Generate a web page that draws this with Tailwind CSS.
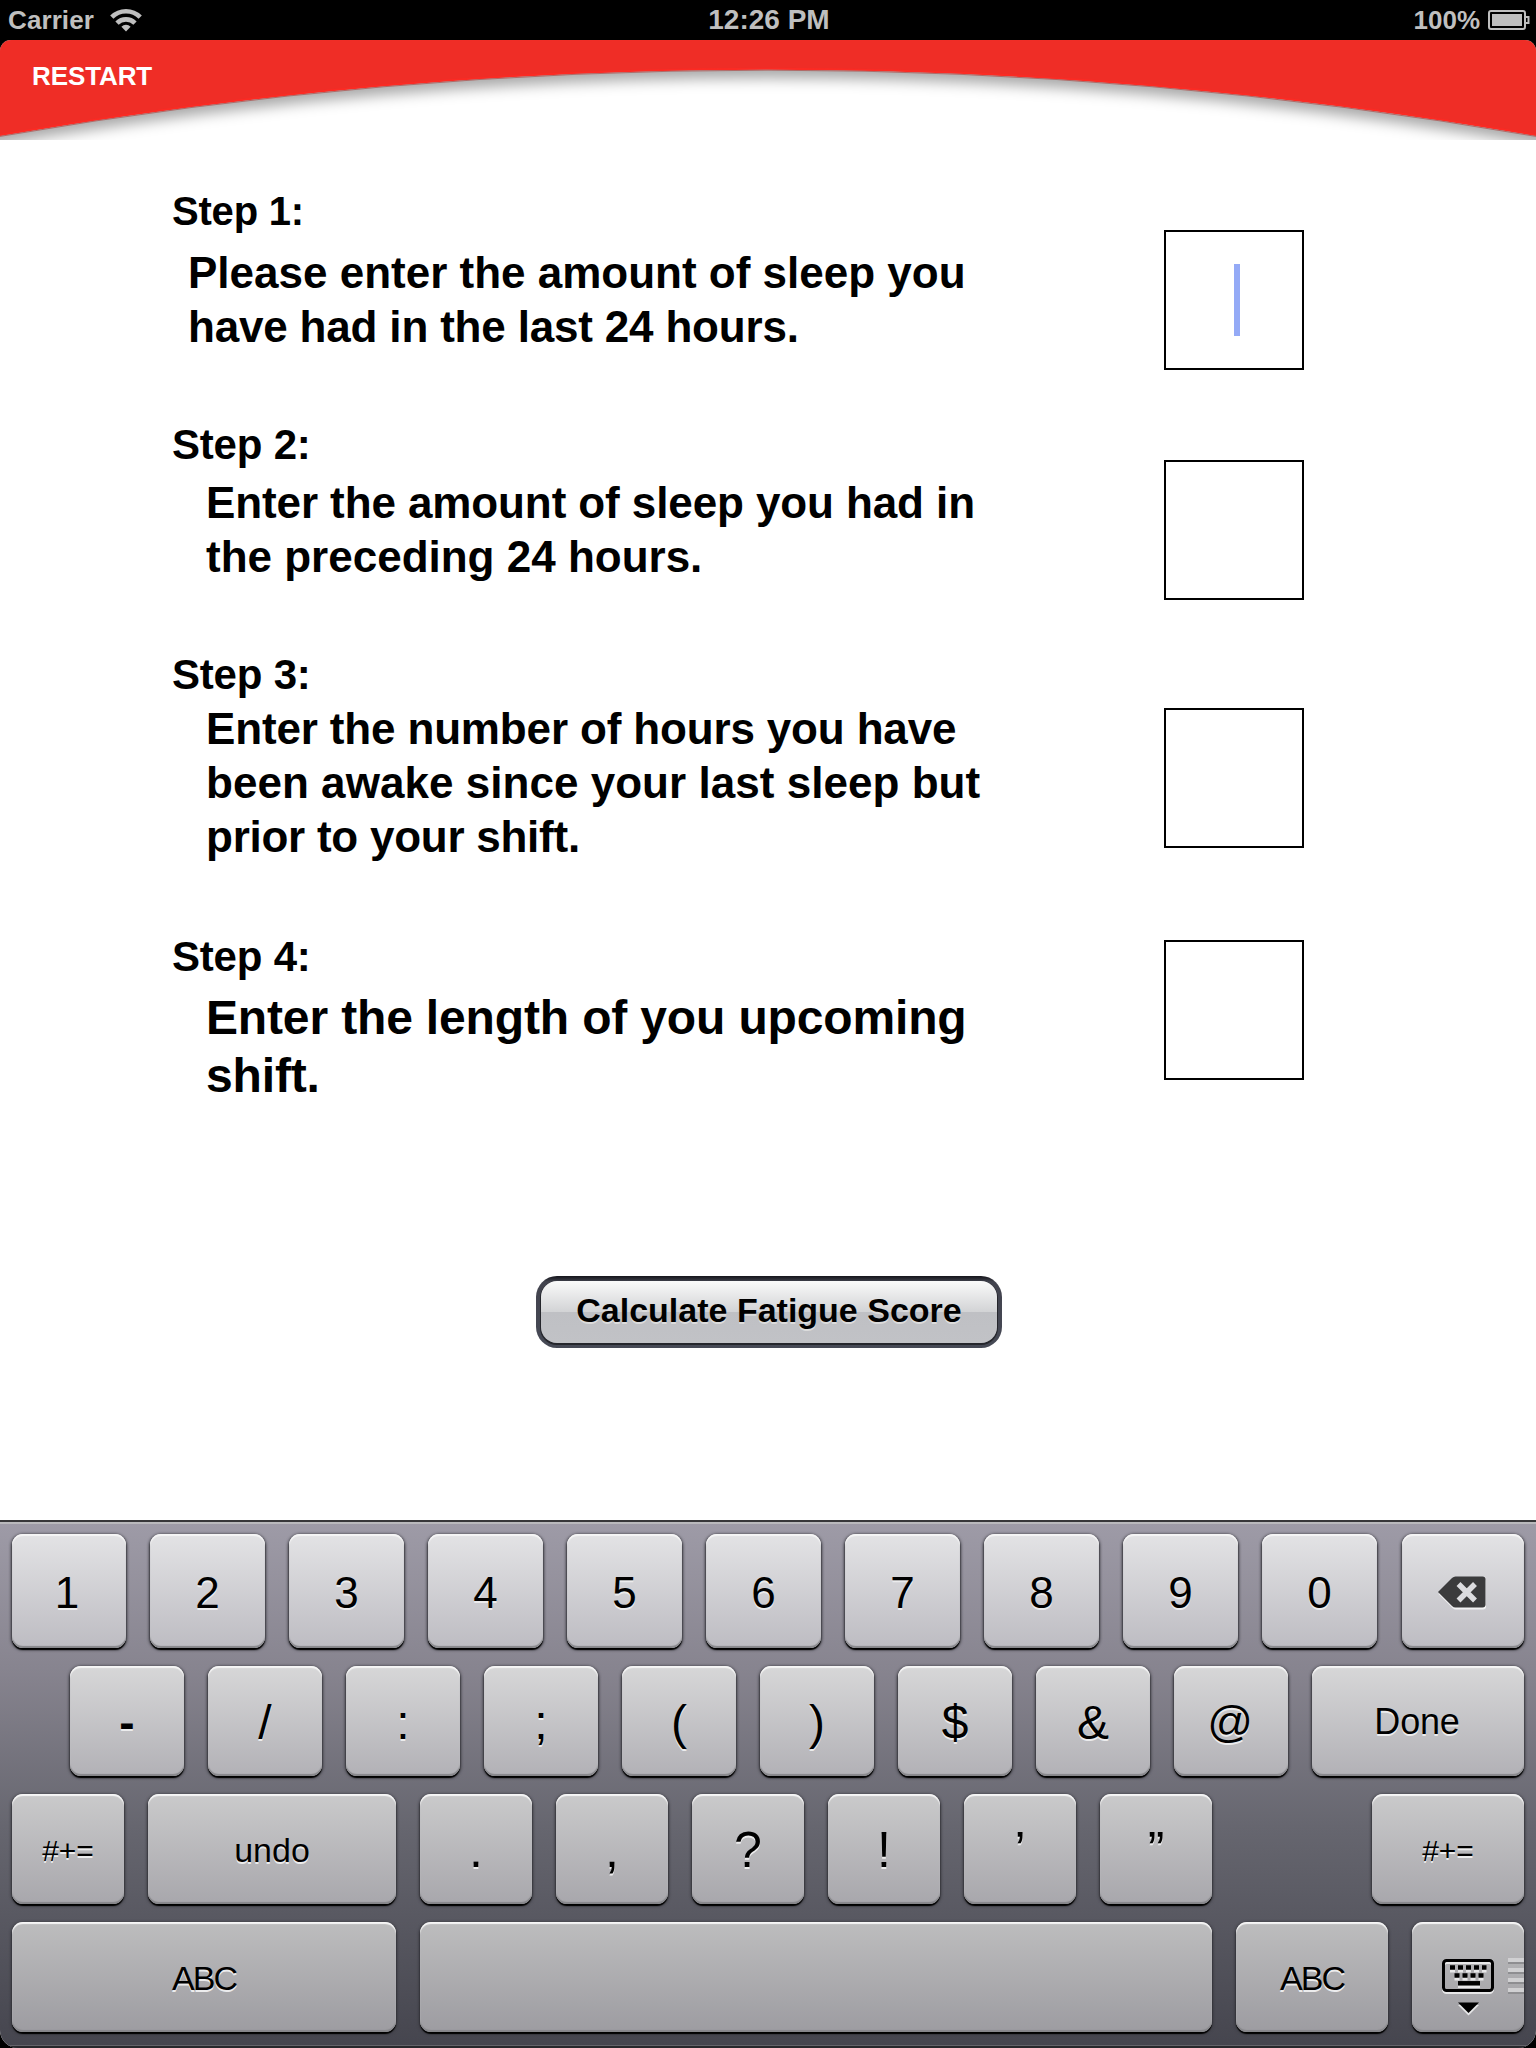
<!DOCTYPE html>
<html lang="en">
<head>
<meta charset="utf-8">
<title>Fatigue Score</title>
<script src="https://cdn.jsdelivr.net/npm/@tailwindcss/browser@4"></script>
</head>
<body class="bg-black">
<div class="flex h-[2048px] w-[1536px] flex-col overflow-hidden bg-black font-['Liberation_Sans',Arial,sans-serif] text-black">
  <!-- status bar -->
  <div class="grid h-10 shrink-0 grid-cols-3 items-center pr-[6px] pl-2 font-bold text-[#bfbfbf]">
    <div class="flex items-center text-[26px] leading-10">
      <span class="tracking-[0.1px]">Carrier</span>
      <svg class="ml-[16px]" width="32" height="24" viewBox="0 0 32 24"><g fill="none" stroke="#bfbfbf" stroke-width="4.6"><path d="M1.8 9.2a20 20 0 0 1 28.4 0"/><path d="M7 15.2a12.6 12.6 0 0 1 18 0"/></g><path d="M16 23.500l-4.600-4.800a6.600 6.600 0 0 1 9.200 0z" fill="#bfbfbf"/></svg>
    </div>
    <div class="text-center text-[28px] leading-[38px]">12:26 PM</div>
    <div class="flex items-center justify-end text-[26px] leading-10">
      <span>100%</span>
      <svg class="ml-[8px]" width="42" height="20" viewBox="0 0 42 20"><rect x="1" y="1" width="36" height="18" rx="2" fill="none" stroke="#bfbfbf" stroke-width="2"/><rect x="4" y="4" width="30" height="12" fill="#bfbfbf"/><path d="M38 7h2.500v6H38" fill="none" stroke="#bfbfbf" stroke-width="2"/></svg>
    </div>
  </div>

  <!-- app area -->
  <div class="flex grow flex-col overflow-hidden rounded-t-[11px] rounded-b-[18px] bg-white">
    <header class="relative h-[100px] shrink-0">
      <svg class="absolute inset-0" width="1536" height="100" viewBox="0 0 1536 100">
        <defs><filter id="soft" x="-5%" y="-30%" width="110%" height="160%"><feGaussianBlur stdDeviation="7"/></filter></defs>
        <path d="M-60 -30H1596V115.300Q768 -38.800 -60 115.300Z" fill="#000" fill-opacity=".34" filter="url(#soft)"/>
        <path d="M0 0H1536V95.500Q768 -37 0 95.500Z" fill="#ef2d26"/>
        <path d="M0 95Q768 -37.500 1536 95" fill="none" stroke="#fb2b24" stroke-width="2"/>
        <path d="M0 96.400Q768 -36.100 1536 96.400" fill="none" stroke="#b06a68" stroke-width="1"/>
      </svg>
      <button class="relative mt-[16px] ml-[32px] block text-[26px] leading-10 font-bold tracking-[-0.1px] text-white">RESTART</button>
    </header>

    <main class="flex h-[1380px] shrink-0 flex-col pt-[47px] pl-[172px] font-bold">
      <section class="flex h-[233px] shrink-0">
        <div class="w-[992px]">
          <h2 class="text-[40px] leading-[48px] tracking-[-0.2px]">Step 1:</h2>
          <p class="mt-[11px] ml-[16px] text-[44px] leading-[54px]">Please enter the amount of sleep you<br><span class="tracking-[-0.18px]">have had in the last 24 hours.</span></p>
        </div>
        <div class="mt-[43px] flex size-[140px] items-center justify-center border-2 border-black"><div class="ml-[6px] h-[72px] w-[6px] bg-[#94aaf6]"></div></div>
      </section>
      <section class="flex h-[230px] shrink-0">
        <div class="w-[992px]">
          <h2 class="pt-px text-[42px] leading-[48px] tracking-[-0.2px]">Step 2:</h2>
          <p class="mt-[7px] ml-[34px] text-[44px] leading-[54px]"><span class="tracking-[-0.1px]">Enter the amount of sleep you had in</span><br>the preceding 24 hours.</p>
        </div>
        <div class="mt-[40px] size-[140px] border-2 border-black"></div>
      </section>
      <section class="flex h-[282px] shrink-0">
        <div class="w-[992px]">
          <h2 class="pt-px text-[42px] leading-[48px] tracking-[-0.2px]">Step 3:</h2>
          <p class="mt-[3px] ml-[34px] text-[44px] leading-[54px]"><span class="tracking-[-0.15px]">Enter the number of hours you have</span><br><span class="tracking-[0.04px]">been awake since your last sleep but</span><br><span class="tracking-[-0.25px]">prior to your shift.</span></p>
        </div>
        <div class="mt-[58px] size-[140px] border-2 border-black"></div>
      </section>
      <section class="flex h-[344px] shrink-0">
        <div class="w-[992px]">
          <h2 class="pt-px text-[42px] leading-[48px] tracking-[-0.2px]">Step 4:</h2>
          <p class="mt-[8px] ml-[34px] text-[48px] leading-[58px] tracking-[-0.15px]">Enter the length of you upcoming<br>shift.</p>
        </div>
        <div class="mt-[8px] size-[140px] border-2 border-black"></div>
      </section>
      <div class="ml-[364px] h-[72px] w-[466px] rounded-[21px] bg-linear-to-b from-[#15151b] via-[#42434e] via-8% to-[#464955] p-[5px]">
        <button class="block h-[62px] w-[456px] rounded-[16px] bg-[linear-gradient(#fafafa,#d2d3d5_50%,#bfc0c4_50%,#c1c2c6)] pb-[3px] text-[34px] leading-[55px] whitespace-nowrap shadow-[0_1px_0_1px_#25262c] [text-shadow:0_2px_0_#dcdcdc]">Calculate Fatigue Score</button>
      </div>
    </main>

    <!-- keyboard -->
    <div id="keyboard" class="flex h-[528px] shrink-0 flex-col gap-[18px] border-t-2 border-[#373739] bg-[linear-gradient(#9e9ba7,#87848f_28%,#66666f_58%,#45454e)] pt-[12px] pl-[12px] shadow-[inset_0_2px_0_#b9b9bc,inset_0_-2px_0_#28282c,inset_0_-3px_0_#64646a]"></div>
  </div>
</div>

<template id="ic-delete">
  <svg class="ml-[-2px] mt-[3px]" width="48" height="34" viewBox="0 0 48 34"><path d="M.5 18L14.500 4Q16 2.500 18 2.500H45Q48 2.500 48 5.500V30.500Q48 33.500 45 33.500H18Q16 33.500 14.500 32Z" fill="#f2f2f3"/><path d="M0 16L14 2Q15.500 .5 17.500 .5H44.500Q47.500 .5 47.500 3.500V28.500Q47.500 31.500 44.500 31.500H17.500Q15.500 31.500 14 30Z" fill="#3b3b3c"/><path d="M20.500 8L37 24.500M37 8L20.500 24.500" stroke="#dcdcdf" stroke-width="5.500"/></svg>
</template>
<template id="ic-hide">
  <svg width="112" height="110" viewBox="0 0 112 110">
    <rect x="31.500" y="40.500" width="49" height="30" rx="3" fill="none" stroke="#e8e8e9" stroke-width="3"/><path d="M46 83H67L56.500 93.500Z" fill="#e8e8e9"/>
    <rect x="31.500" y="38.500" width="49" height="30" rx="3" fill="none" stroke="#000" stroke-width="3"/>
    <g stroke-dasharray="5 3" fill="none"><path d="M38 48.500H74.500M42.500 56.500H71.500" stroke="#e8e8e9" stroke-width="4"/><path d="M38 45.500H74.500M42.500 53.500H71.500" stroke="#000" stroke-width="4.500"/></g>
    <path d="M46 64.500H68" stroke="#e8e8e9" stroke-width="3"/><path d="M46 61.300H68" stroke="#000" stroke-width="4.500"/>
    <path d="M46 80.500H67L56.500 91Z" fill="#000"/>
    <g fill="#d0d0d2"><path d="M96 36h16v4H96zM96 46h16v4H96zM96 56h16v4H96zM96 66h16v4H96z"/></g>
    <g fill="#8e8e91"><path d="M96 40h16v2H96zM96 50h16v2H96zM96 60h16v2H96zM96 70h16v2H96z"/></g>
  </svg>
</template>
<script>
  // Each key: [label, width, text classes, left margin]
  const big = 'text-[44px] pt-[4px]', sym = 'text-[48px] pt-[4px]', punct = 'text-[50px] pt-[2px]';
  const rows = [
    { cls: 'h-[114px] bg-[linear-gradient(#e3e3e5,#bdbcc2)]', keys: [['1',114,big+' pr-[4px]'],...'234567890'.split('').map(d => [d,115,big]),['@delete',122,'',1]] },
    { cls: 'h-[110px] bg-[linear-gradient(#d7d7d8,#b2b1b6)]', keys: [['-',114,'text-[46px] font-bold pt-[2px]',58],...['/',':',';','(',')','$','&'].map(s => [s,114,sym]),['@',114,'text-[45px] pr-[2px]'],['Done',212,'text-[36px] pt-[2px] pr-[2px] tracking-[-0.2px]']] },
    { cls: 'h-[110px] bg-[linear-gradient(#cacacb,#a8a7ac)]', keys: [['#+=',112,'text-[30px] pt-[3px]'],['undo',248,'text-[34px] pt-[2px]'],...['.',',','?','!','’','”'].map(s => [s,112,punct]),['#+=',152,'text-[30px] pt-[3px]',136]] },
    { cls: 'h-[110px] bg-[linear-gradient(#bdbdbe,#9d9ca1)]', keys: [['ABC',384,'text-[34px] pt-[1px] tracking-[-2px]'],['',792,''],['ABC',152,'text-[34px] pt-[1px] tracking-[-2px]'],['@hide',112,'']] }
  ];
  const board = document.getElementById('keyboard');
  for (const row of rows) {
    const line = document.createElement('div');
    line.className = 'flex shrink-0 gap-[24px]';
    for (const [label, width, cls, left] of row.keys) {
      const key = document.createElement('button');
      key.className = 'flex shrink-0 items-center justify-center rounded-[11px] leading-none shadow-[inset_0_2px_1px_#f6f6f6,inset_0_-2px_1px_#86868a,0_2px_1px_#000,0_1px_3px_1px_#35353b] [text-shadow:0_2px_0_#ececed] ' + row.cls + ' ' + cls;
      key.style.width = width + 'px';
      if (left) key.style.marginLeft = left + 'px';
      if (label.length > 1 && label[0] === '@') key.append(document.getElementById('ic-' + label.slice(1)).content.cloneNode(true));
      else { const s = document.createElement('span'); s.textContent = label; key.append(s); }
      line.append(key);
    }
    board.append(line);
  }
</script>
</body>
</html>
